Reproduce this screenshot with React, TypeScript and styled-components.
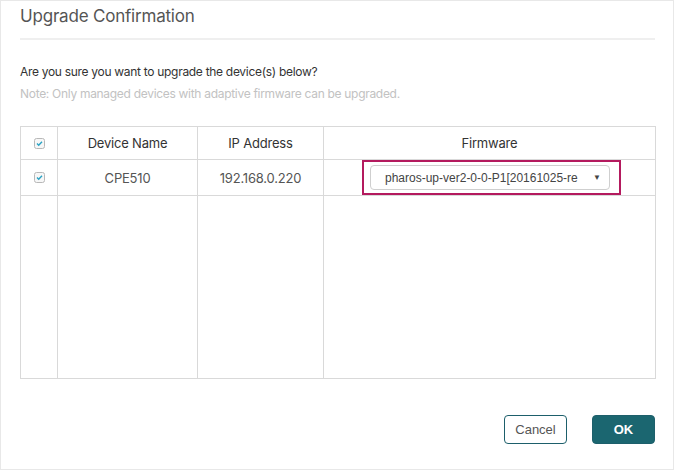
import * as React from 'react';
import styled, { createGlobalStyle } from 'styled-components';

const GlobalStyle = createGlobalStyle`
  html, body {
    margin: 0;
    padding: 0;
    background: #ffffff;
  }
  body {
    font-family: 'Liberation Sans', Arial, sans-serif;
  }
`;

const Dialog = styled.div`
  box-sizing: border-box;
  width: 674px;
  height: 470px;
  border: 1px solid #e8e8e8;
  padding: 0 18px 0 19px;
  display: flex;
  flex-direction: column;
  background: #fff;
`;

const Title = styled.div`
  box-sizing: border-box;
  height: 39px;
  display: flex;
  align-items: center;
  padding-bottom: 8px;
  border-bottom: 2px solid #efefef;
  font-family: Inter, 'Liberation Sans', sans-serif;
  font-size: 17px;
  color: #555;
  letter-spacing: -0.2px;
`;

const Message = styled.div`
  margin-top: 21px;
  font-family: Inter, 'Liberation Sans', sans-serif;
  font-size: 12px;
  line-height: 22px;
  letter-spacing: -0.3px;
`;

const Question = styled.div`
  color: #333;
`;

const Note = styled.div`
  color: #c2c2c2;
`;

const Table = styled.table`
  margin-top: 21px;
  width: 635px;
  border-collapse: collapse;
  table-layout: fixed;
  font-family: Inter, 'Liberation Sans', sans-serif;
  font-size: 13px;
  letter-spacing: -0.2px;
`;

const Th = styled.th<{ $w: number }>`
  width: ${({ $w }) => $w}px;
  height: 32px;
  border: 1px solid #d9d9d9;
  font-weight: normal;
  color: #333;
  text-align: center;
  padding: 0;
`;

const Td = styled.td`
  height: 35px;
  border: 1px solid #d9d9d9;
  color: #555;
  text-align: center;
  padding: 0;
`;

const FillerCell = styled.td`
  height: 182px;
  border: 1px solid #d9d9d9;
  padding: 0;
`;

const Highlight = styled.div`
  box-sizing: border-box;
  margin-left: 38px;
  width: 259px;
  height: 35px;
  border: 2px solid #b41a5e;
  display: flex;
  align-items: center;
  padding-left: 6px;
`;

const Select = styled.div`
  box-sizing: border-box;
  width: 240px;
  height: 25px;
  border: 1px solid #cfcfcf;
  border-radius: 4px;
  display: flex;
  align-items: center;
  justify-content: space-between;
  padding: 0 8px 0 14px;
  font-family: 'Liberation Sans', Arial, sans-serif;
  font-size: 12px;
  color: #444;
  letter-spacing: 0;
`;

const Caret = styled.span`
  font-size: 8px;
  color: #444;
`;

const Footer = styled.div`
  margin-top: 36px;
  display: flex;
  justify-content: flex-end;
  gap: 25px;
`;

const Button = styled.button<{ $primary?: boolean }>`
  box-sizing: border-box;
  width: 63px;
  height: 29px;
  border-radius: 4px;
  border: 1px solid #1d5f6b;
  background: ${({ $primary }) => ($primary ? '#1b6670' : '#fff')};
  color: ${({ $primary }) => ($primary ? '#fff' : '#555')};
  font-family: 'Liberation Sans', Arial, sans-serif;
  font-size: 13px;
  font-weight: ${({ $primary }) => ($primary ? 'bold' : 'normal')};
  padding: 0;
`;

const Check = () => (
  <svg width="11" height="11" viewBox="0 0 11 11" style={{ display: 'block', margin: '0 auto' }}>
    <rect x="0.5" y="0.5" width="10" height="10" rx="2" fill="#f7f7f7" stroke="#b8b8b8" />
    <path d="M3 5.6 L4.7 7.2 L8 3.8" fill="none" stroke="#2aa3c4" strokeWidth="1.4" />
  </svg>
);

export default function App() {
  return (
    <>
      <GlobalStyle />
      <Dialog>
        <Title>Upgrade Confirmation</Title>
        <Message>
          <Question>Are you sure you want to upgrade the device(s) below?</Question>
          <Note>Note: Only managed devices with adaptive firmware can be upgraded.</Note>
        </Message>
        <Table>
          <thead>
            <tr>
              <Th $w={36}>
                <Check />
              </Th>
              <Th $w={139}>Device Name</Th>
              <Th $w={125}>IP Address</Th>
              <Th $w={331}>Firmware</Th>
            </tr>
          </thead>
          <tbody>
            <tr>
              <Td>
                <Check />
              </Td>
              <Td>CPE510</Td>
              <Td>192.168.0.220</Td>
              <Td>
                <Highlight>
                  <Select>
                    <span>pharos-up-ver2-0-0-P1[20161025-re</span>
                    <Caret>▼</Caret>
                  </Select>
                </Highlight>
              </Td>
            </tr>
            <tr>
              <FillerCell />
              <FillerCell />
              <FillerCell />
              <FillerCell />
            </tr>
          </tbody>
        </Table>
        <Footer>
          <Button>Cancel</Button>
          <Button $primary>OK</Button>
        </Footer>
      </Dialog>
    </>
  );
}
